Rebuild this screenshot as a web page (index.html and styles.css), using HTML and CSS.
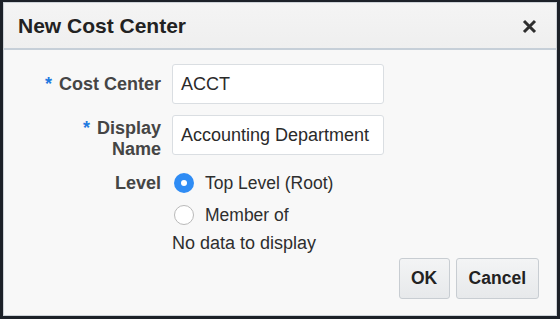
FILE: index.html
```html
<!DOCTYPE html>
<html>
<head>
<meta charset="utf-8">
<link rel="stylesheet" href="styles.css">
</head>
<body>
<div class="dialog">
  <div class="header">
    <h1 class="title">New Cost Center</h1>
    <button class="close" aria-label="Close">
      <svg width="15" height="15" viewBox="0 0 15 15"><path d="M2 2 L13 13 M13 2 L2 13" stroke="#2e2e2e" stroke-width="3" stroke-linecap="butt"/></svg>
    </button>
  </div>
  <div class="content">
    <div class="form">
      <label class="label"><span class="req">*</span>Cost Center</label>
      <div class="input">ACCT</div>
      <label class="label multi"><span class="req">*</span>Display Name</label>
      <div class="input">Accounting Department</div>
      <label class="label level">Level</label>
      <div class="levels">
        <div class="option"><span class="radio on"></span>Top Level (Root)</div>
        <div class="option"><span class="radio"></span>Member of</div>
        <div class="nodata">No data to display</div>
      </div>
    </div>
    <div class="buttons">
      <button class="btn ok">OK</button>
      <button class="btn cancel">Cancel</button>
    </div>
  </div>
</div>
</body>
</html>
```
FILE: styles.css
```css
html, body {
  margin: 0;
  padding: 0;
  background: #1c2128;
  height: 319px;
  overflow: hidden;
}
body {
  font-family: "Liberation Sans", Arial, sans-serif;
}
.dialog {
  margin: 2px 3px 3px 3px;
  height: 312px;
  border: 1px solid #cdd2d7;
  background: #f8f8f8;
  display: flex;
  flex-direction: column;
}
.header {
  height: 45px;
  border-bottom: 2px solid #c6cfd8;
  background: linear-gradient(#f4f4f4, #efefef);
  display: flex;
  align-items: center;
  justify-content: space-between;
  padding: 0 19px 0 14px;
}
.title {
  margin: 0;
  font-size: 21px;
  font-weight: bold;
  color: #222;
  line-height: 24px;
}
.close {
  border: 0;
  background: none;
  padding: 0;
  width: 15px;
  height: 15px;
  display: flex;
  margin-top: 1px;
}
.content {
  flex: 1;
  display: flex;
  flex-direction: column;
  padding: 14px 17px 0 37px;
}
.form {
  display: grid;
  grid-template-columns: 120px 212px;
  column-gap: 11px;
  row-gap: 11px;
}
.label {
  text-align: right;
  font-size: 18px;
  font-weight: bold;
  color: #454545;
  line-height: 21px;
  align-self: center;
}
.label.multi {
  align-self: start;
  margin-top: 3px;
  margin-bottom: -5px;
}
.label.level {
  align-self: start;
  line-height: 32px;
  margin-top: 1px;
}
.req {
  color: #1f7ae0;
  margin-right: 7px;
}
.input {
  height: 38px;
  border: 1px solid #dadee2;
  border-radius: 3px;
  background: #fff;
  padding-left: 8px;
  font-size: 18px;
  line-height: 38px;
  color: #2a2a2a;
  white-space: nowrap;
  overflow: hidden;
}
.levels {
  display: flex;
  flex-direction: column;
  margin-top: 1px;
  font-size: 17.5px;
  color: #2e2e2e;
}
.option {
  height: 32px;
  display: flex;
  align-items: center;
}
.radio {
  width: 20px;
  height: 20px;
  border-radius: 50%;
  box-sizing: border-box;
  border: 1px solid #b9b9b9;
  background: #fff;
  margin: 0 11px 0 2px;
  display: flex;
  align-items: center;
  justify-content: center;
}
.radio.on {
  border: none;
  background: #2f8cf4;
}
.radio.on::after {
  content: "";
  width: 6px;
  height: 6px;
  border-radius: 50%;
  background: #fff;
}
.nodata {
  line-height: 24px;
  font-size: 18px;
}
.buttons {
  display: flex;
  justify-content: flex-end;
  gap: 6px;
  margin-top: 3px;
}
.btn {
  height: 41px;
  min-width: 51px;
  padding: 0 11px;
  border: 1px solid #c8cdd2;
  border-radius: 3px;
  background: linear-gradient(#f3f4f5, #e7e9eb);
  font-family: "Liberation Sans", Arial, sans-serif;
  font-size: 17.5px;
  font-weight: bold;
  color: #222;
}
.btn.cancel {
  padding: 0 12px;
}
```
